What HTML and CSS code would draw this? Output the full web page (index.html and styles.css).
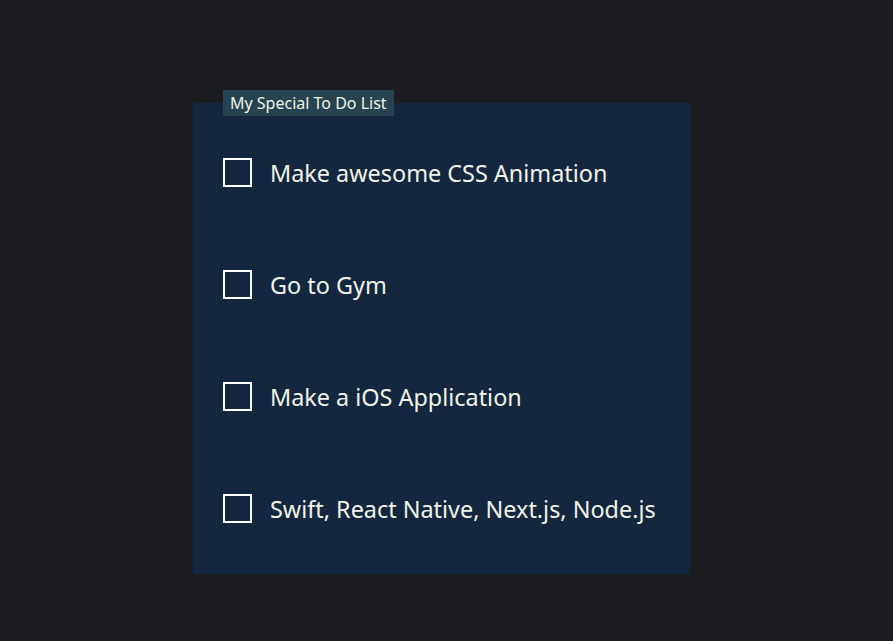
FILE: index.html
```html
<!DOCTYPE html>
<html>
<head>
<meta charset="utf-8">
<link rel="stylesheet" href="styles.css">
</head>
<body>
<fieldset class="todo">
  <legend class="todo-title">My Special To Do List</legend>
  <label class="todo-item"><input type="checkbox" class="todo-check"><span class="todo-text">Make awesome CSS Animation</span></label>
  <label class="todo-item"><input type="checkbox" class="todo-check"><span class="todo-text">Go to Gym</span></label>
  <label class="todo-item"><input type="checkbox" class="todo-check"><span class="todo-text">Make a iOS Application</span></label>
  <label class="todo-item"><input type="checkbox" class="todo-check"><span class="todo-text">Swift, React Native, Next.js, Node.js</span></label>
</fieldset>
</body>
</html>
```
FILE: styles.css
```css
html, body {
  margin: 0;
  padding: 0;
  background: #1b1d21;
}
body {
  padding: 90px 0 0 193px;
  font-family: "Noto Sans", "Open Sans", sans-serif;
  color: #eef4e8;
}
.todo {
  box-sizing: border-box;
  width: 497px;
  margin: 0;
  border: 0;
  padding: 0 0 10px 30px;
  background: #15273f;
  display: flex;
  flex-direction: column;
}
.todo-title {
  background: #26434f;
  padding: 0 7px;
  font-size: 16px;
  line-height: 26px;
  color: #eef4e8;
}
.todo-item {
  flex: 0 0 112px;
  height: 112px;
  display: flex;
  align-items: center;
  gap: 18px;
}
.todo-check {
  appearance: none;
  -webkit-appearance: none;
  margin: 0;
  width: 29px;
  height: 29px;
  border: 2px solid #ffffff;
  box-sizing: border-box;
  background: transparent;
}
.todo-text {
  font-size: 23.4px;
  line-height: 30px;
  padding-top: 2px;
}
```
